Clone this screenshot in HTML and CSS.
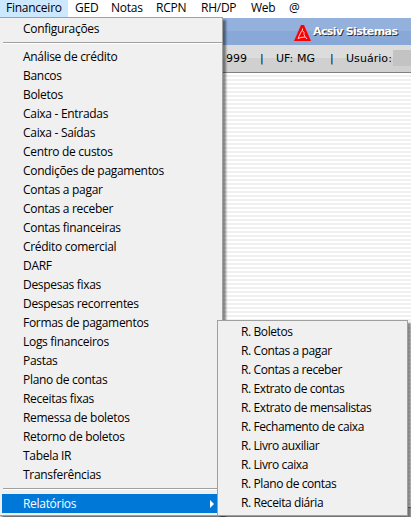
FILE: index.html
```html
<!DOCTYPE html>
<html lang="pt-BR">
<head>
<meta charset="utf-8">
<title>Acsiv Sistemas</title>
<link rel="stylesheet" href="styles.css">
</head>
<body>
<nav class="menubar">
<span class="top open">Financeiro</span><span class="top ged">GED</span><span class="top notas">Notas</span><span class="top rcpn">RCPN</span><span class="top rh">RH/DP</span><span class="top web">Web</span><span class="top">@</span>
</nav>
<header class="brand">
<svg class="logo" width="17" height="16" viewBox="0 0 17 16"><path d="M7 0h3l7 16H0z" fill="#f00"/><path d="M8.5 3.5v2l1.5 2v2l1 2 2 2.500M8 5.500l-2 3.500-2 4.500 3-1 4-.5" stroke="#fff" stroke-width=".8" fill="none"/></svg>
<span class="brand-name">Acsiv Sistemas</span>
</header>
<div class="status"><span class="code">999</span><span class="bar">|</span><span class="uf">UF: MG</span><span class="bar">|</span><span class="user">Usuário:</span><span class="redacted"></span></div>
<main class="workspace"></main>
<footer class="bottom"></footer>
<div class="menu main-menu">
<div class="item">Configurações</div>
<div class="sep"></div>
<div class="item">Análise de crédito</div>
<div class="item">Bancos</div>
<div class="item">Boletos</div>
<div class="item">Caixa - Entradas</div>
<div class="item">Caixa - Saídas</div>
<div class="item">Centro de custos</div>
<div class="item">Condições de pagamentos</div>
<div class="item">Contas a pagar</div>
<div class="item">Contas a receber</div>
<div class="item">Contas financeiras</div>
<div class="item">Crédito comercial</div>
<div class="item">DARF</div>
<div class="item">Despesas fixas</div>
<div class="item">Despesas recorrentes</div>
<div class="item">Formas de pagamentos</div>
<div class="item">Logs financeiros</div>
<div class="item">Pastas</div>
<div class="item">Plano de contas</div>
<div class="item">Receitas fixas</div>
<div class="item">Remessa de boletos</div>
<div class="item">Retorno de boletos</div>
<div class="item">Tabela IR</div>
<div class="item">Transferências</div>
<div class="sep low"></div>
<div class="item active">Relatórios<svg class="arrow" width="4" height="8" viewBox="0 0 4 8"><path d="M0 0l4 4-4 4z" fill="#fff"/></svg></div>
</div>
<div class="menu sub-menu">
<div class="item">R. Boletos</div>
<div class="item">R. Contas a pagar</div>
<div class="item">R. Contas a receber</div>
<div class="item">R. Extrato de contas</div>
<div class="item">R. Extrato de mensalistas</div>
<div class="item">R. Fechamento de caixa</div>
<div class="item">R. Livro auxiliar</div>
<div class="item">R. Livro caixa</div>
<div class="item">R. Plano de contas</div>
<div class="item">R. Receita diária</div>
</div>
</body>
</html>
```
FILE: styles.css
```css
* { box-sizing: border-box; }
body {
  margin: 0;
  width: 411px;
  height: 517px;
  overflow: hidden;
  position: relative;
  display: flex;
  flex-direction: column;
  background: #fff;
  color: #000;
  font: 12px/19px "Open Sans", sans-serif;
  letter-spacing: -.3px;
}
.menubar { display: flex; height: 18px; line-height: 16px; flex: none; letter-spacing: -.25px; }
.top { white-space: nowrap; }
.open { width: 68px; height: 17px; padding-left: 6px; margin-right: 7px; background: #cce8ff; }
.ged { width: 36px; }
.notas { width: 45px; }
.rcpn { width: 45px; }
.rh { width: 50px; }
.web { width: 38px; }
.brand {
  height: 27px;
  flex: none;
  display: flex;
  align-items: center;
  padding-left: 294px;
  background: linear-gradient(#94b0dc 50%, #88a8d8 50%);
}
.brand-name {
  margin-left: 2px;
  color: #fff;
  font: bold 11px/16px "DejaVu Sans", sans-serif;
  letter-spacing: -.6px;
  text-shadow: 1px 1px 0 #333;
  white-space: nowrap;
}
.logo { margin-top: 2px; }
.status {
  height: 28px;
  flex: none;
  display: flex;
  align-items: center;
  padding-left: 226px;
  border-bottom: 1px solid #808080;
  background: linear-gradient(#dcdcdc 50%, #d0d0d0 50%);
  font: 11px/16px "DejaVu Sans", sans-serif;
  letter-spacing: .05px;
}
.code { width: 34px; }
.bar { width: 16px; }
.uf { width: 54px; }
.user { width: 47px; white-space: nowrap; }
.redacted { width: 18px; height: 16px; margin-top: -1px; background: #c3c3c3; }
.workspace { flex: 1; background: repeating-linear-gradient(#fff 0 2px, #f0f0f0 2px 4px); }
.bottom { height: 10px; flex: none; background: #d0d0d0; border-top: 1px solid #808080; }
.menu {
  position: absolute;
  background: #f0f0f0;
  border: 1px solid #a0a0a0;
  box-shadow: 3px 3px 2px rgba(0,0,0,.45);
}
.main-menu { left: -1px; top: 17px; width: 224px; height: 499px; padding: 1px 0 0 2px; }
.sub-menu { left: 217px; top: 320px; width: 191px; height: 196px; padding: 1px 2px; letter-spacing: -.4px; }
.item { height: 19px; padding-left: 21px; white-space: nowrap; }
.sep { height: 2px; margin: 4px 0 3px 1px; border-top: 1px solid #a0a0a0; border-bottom: 1px solid #fff; }
.low { margin: 4px 0 4px 1px; }
.active { display: flex; align-items: center; justify-content: space-between; padding-right: 8px; color: #fff; background: #0078d7; }
```
